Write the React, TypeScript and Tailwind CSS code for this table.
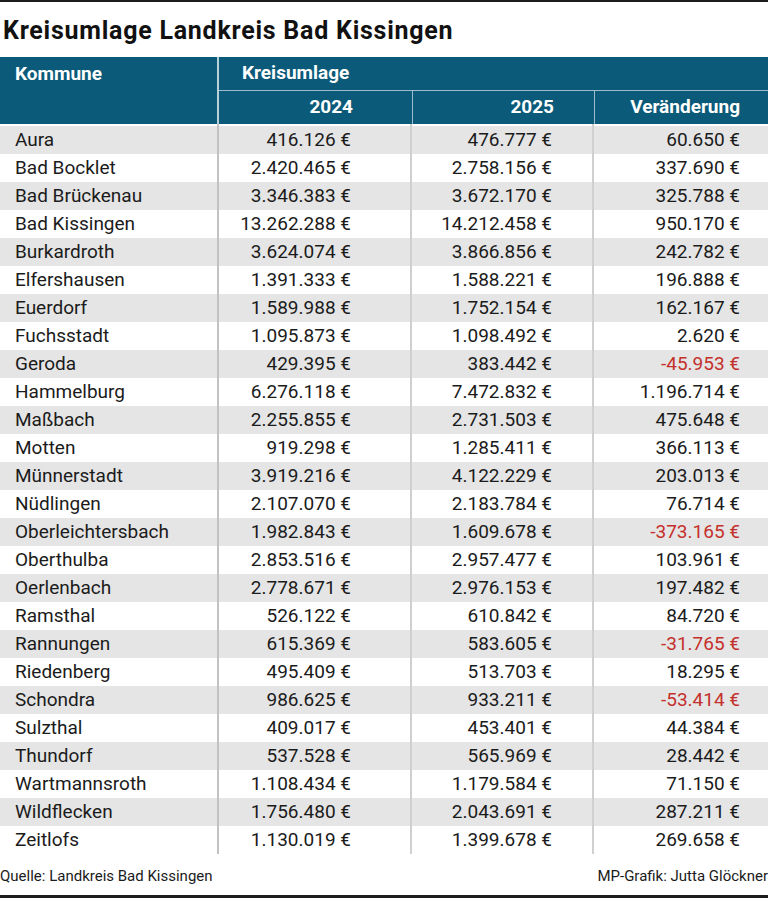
const rows: [string, string, string, string][] = [
  ['Aura', '416.126 €', '476.777 €', '60.650 €'],
  ['Bad Bocklet', '2.420.465 €', '2.758.156 €', '337.690 €'],
  ['Bad Brückenau', '3.346.383 €', '3.672.170 €', '325.788 €'],
  ['Bad Kissingen', '13.262.288 €', '14.212.458 €', '950.170 €'],
  ['Burkardroth', '3.624.074 €', '3.866.856 €', '242.782 €'],
  ['Elfershausen', '1.391.333 €', '1.588.221 €', '196.888 €'],
  ['Euerdorf', '1.589.988 €', '1.752.154 €', '162.167 €'],
  ['Fuchsstadt', '1.095.873 €', '1.098.492 €', '2.620 €'],
  ['Geroda', '429.395 €', '383.442 €', '-45.953 €'],
  ['Hammelburg', '6.276.118 €', '7.472.832 €', '1.196.714 €'],
  ['Maßbach', '2.255.855 €', '2.731.503 €', '475.648 €'],
  ['Motten', '919.298 €', '1.285.411 €', '366.113 €'],
  ['Münnerstadt', '3.919.216 €', '4.122.229 €', '203.013 €'],
  ['Nüdlingen', '2.107.070 €', '2.183.784 €', '76.714 €'],
  ['Oberleichtersbach', '1.982.843 €', '1.609.678 €', '-373.165 €'],
  ['Oberthulba', '2.853.516 €', '2.957.477 €', '103.961 €'],
  ['Oerlenbach', '2.778.671 €', '2.976.153 €', '197.482 €'],
  ['Ramsthal', '526.122 €', '610.842 €', '84.720 €'],
  ['Rannungen', '615.369 €', '583.605 €', '-31.765 €'],
  ['Riedenberg', '495.409 €', '513.703 €', '18.295 €'],
  ['Schondra', '986.625 €', '933.211 €', '-53.414 €'],
  ['Sulzthal', '409.017 €', '453.401 €', '44.384 €'],
  ['Thundorf', '537.528 €', '565.969 €', '28.442 €'],
  ['Wartmannsroth', '1.108.434 €', '1.179.584 €', '71.150 €'],
  ['Wildflecken', '1.756.480 €', '2.043.691 €', '287.211 €'],
  ['Zeitlofs', '1.130.019 €', '1.399.678 €', '269.658 €'],
];

export default function App() {
  return (
    <div className="w-[768px] h-[898px] bg-white flex flex-col font-['Roboto',sans-serif] text-[#1b1b1b] overflow-hidden">
      <div className="h-[2px] bg-[#1c1c1c]" />
      <div className="h-[55px] flex items-center pl-[3px] pt-[3px]">
        <h1 className="text-[25px] font-bold text-[#111] tracking-[0.75px]">
          Kreisumlage Landkreis Bad Kissingen
        </h1>
      </div>
      {/* header */}
      <div className="flex h-[67px] bg-[#0b5a79] text-white font-bold text-[19px] font-stretch-[88%]">
        <div className="w-[217px] h-[34px] flex items-center pl-[15px]">Kommune</div>
        <div className="flex-1 flex flex-col border-l-2 border-[#b9cfd9]">
          <div className="h-[34px] flex items-center pl-[23px] border-b border-[#9fbccb]">Kreisumlage</div>
          <div className="flex flex-1">
            <div className="w-[193px] flex items-center justify-end pr-[59px]">2024</div>
            <div className="w-[182px] flex items-center justify-end pr-[40px] border-l border-[#9fbccb]">2025</div>
            <div className="flex-1 flex items-center justify-end pr-[28px] border-l border-[#9fbccb]">Veränderung</div>
          </div>
        </div>
      </div>
      {/* body */}
      <div className="flex flex-col">
        <div className="flex h-[2px]">
          <div className="w-[217px]" />
          <div className="w-[193px] border-l-2 border-[#c2c2c2]" />
          <div className="w-[182px] border-l-2 border-[#d0d0d0]" />
          <div className="flex-1 border-l-2 border-[#d0d0d0]" />
        </div>
        {rows.map((r, i) => {
          const neg = r[3].startsWith('-');
          return (
            <div
              key={r[0]}
              className={`flex h-[28px] text-[19px] ${i % 2 === 0 ? 'bg-[#e5e5e5]' : 'bg-white'}`}
            >
              <div className="w-[217px] flex items-center pl-[15px] font-stretch-[88%]">{r[0]}</div>
              <div className="w-[193px] flex items-center justify-end pr-[59px] border-l-2 border-[#c2c2c2] font-stretch-[97%]">
                {r[1]}
              </div>
              <div className="w-[182px] flex items-center justify-end pr-[40px] border-l-2 border-[#d0d0d0] font-stretch-[97%]">
                {r[2]}
              </div>
              <div
                className={`flex-1 flex items-center justify-end pr-[28px] border-l-2 border-[#d0d0d0] font-stretch-[97%] ${
                  neg ? 'text-[#c4302b]' : ''
                }`}
              >
                {r[3]}
              </div>
            </div>
          );
        })}
      </div>
      {/* footer */}
      <div className="flex-1 flex items-center justify-between text-[15px] font-stretch-[88%] text-[#1b1b1b] pt-[3px]">
        <span>Quelle: Landkreis Bad Kissingen</span>
        <span>MP-Grafik: Jutta Glöckner</span>
      </div>
      <div className="h-[3px] bg-[#1c1c1c]" />
    </div>
  );
}
